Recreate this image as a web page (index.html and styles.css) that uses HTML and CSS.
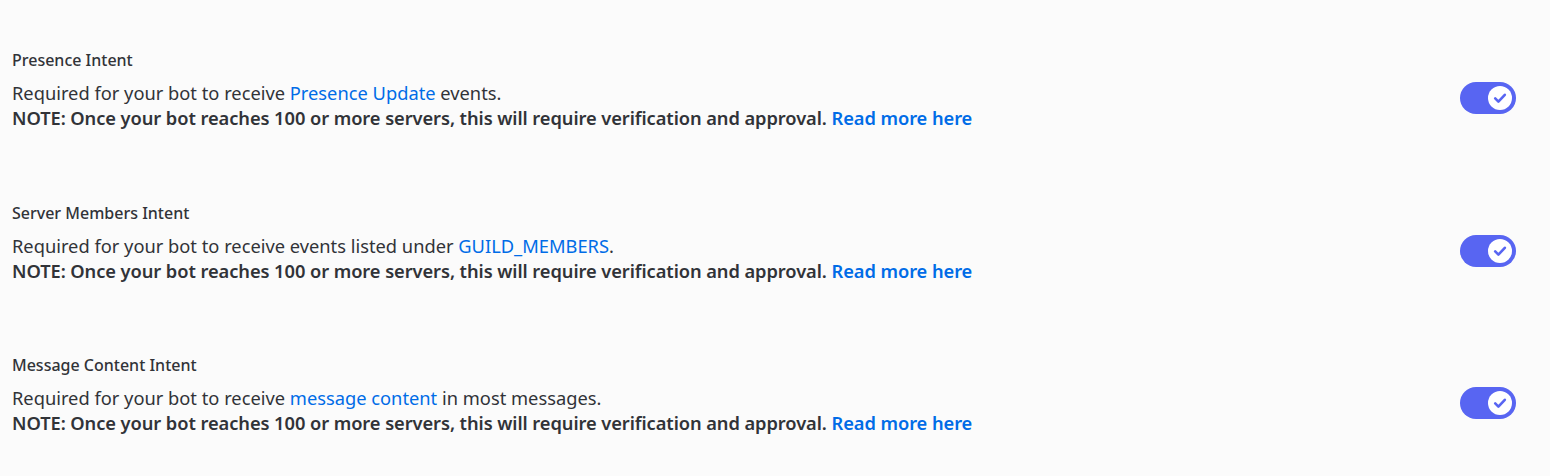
FILE: index.html
```html
<!DOCTYPE html>
<html>
<head>
<meta charset="utf-8">
<link rel="stylesheet" href="styles.css">
</head>
<body>
<div class="list">
  <div class="intent">
    <div class="text">
      <div class="title">Presence Intent</div>
      <div class="desc">Required for your bot to receive <a class="link" href="#">Presence Update</a> events.<br><strong>NOTE: Once your bot reaches 100 or more servers, this will require verification and approval. <a class="link" href="#">Read more here</a></strong></div>
    </div>
    <div class="toggle"><span class="knob"><svg viewBox="0 0 24 24" width="24" height="24"><path d="M7.2 12.4l3.2 3.2 6.4-6.8" fill="none" stroke="#5865f2" stroke-width="2.6" stroke-linecap="round" stroke-linejoin="round"/></svg></span></div>
  </div>
  <div class="intent">
    <div class="text">
      <div class="title">Server Members Intent</div>
      <div class="desc">Required for your bot to receive events listed under <a class="link" href="#">GUILD_MEMBERS</a>.<br><strong>NOTE: Once your bot reaches 100 or more servers, this will require verification and approval. <a class="link" href="#">Read more here</a></strong></div>
    </div>
    <div class="toggle"><span class="knob"><svg viewBox="0 0 24 24" width="24" height="24"><path d="M7.2 12.4l3.2 3.2 6.4-6.8" fill="none" stroke="#5865f2" stroke-width="2.6" stroke-linecap="round" stroke-linejoin="round"/></svg></span></div>
  </div>
  <div class="intent">
    <div class="text">
      <div class="title">Message Content Intent</div>
      <div class="desc">Required for your bot to receive <a class="link" href="#">message content</a> in most messages.<br><strong>NOTE: Once your bot reaches 100 or more servers, this will require verification and approval. <a class="link" href="#">Read more here</a></strong></div>
    </div>
    <div class="toggle"><span class="knob"><svg viewBox="0 0 24 24" width="24" height="24"><path d="M7.2 12.4l3.2 3.2 6.4-6.8" fill="none" stroke="#5865f2" stroke-width="2.6" stroke-linecap="round" stroke-linejoin="round"/></svg></span></div>
  </div>
</div>
</body>
</html>
```

FILE: styles.css
```css
html, body {
  margin: 0;
  padding: 0;
  background: #fbfbfb;
}
body {
  font-family: "Noto Sans", "Open Sans", sans-serif;
  color: #313338;
}
.list {
  display: flex;
  flex-direction: column;
  gap: 72.6px;
  padding: 50px 34px 0 12px;
}
.intent {
  display: flex;
  justify-content: space-between;
  align-items: flex-start;
}
.title {
  font-size: 16px;
  font-weight: 500;
  line-height: 20px;
  margin-bottom: 10px;
}
.desc {
  font-size: 18.3px;
  line-height: 25px;
}
.desc strong {
  font-weight: 600;
  letter-spacing: -0.075px;
}
.link {
  color: #006ce7;
  text-decoration: none;
}
.toggle {
  width: 56px;
  height: 32px;
  border-radius: 16px;
  background: #5865f2;
  margin-top: 32px;
  display: flex;
  align-items: center;
  justify-content: flex-end;
  padding-right: 4px;
  box-sizing: border-box;
}
.knob {
  width: 24px;
  height: 24px;
  border-radius: 50%;
  background: #fff;
  display: flex;
}
```
